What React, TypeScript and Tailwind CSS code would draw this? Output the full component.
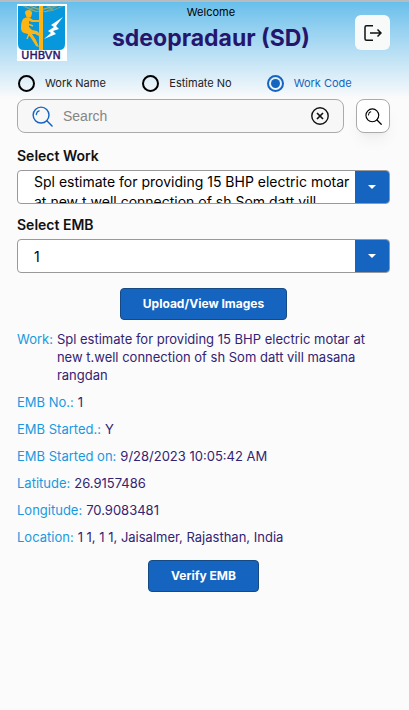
import { useState, type ReactNode } from "react"

const searchModes = ["Work Name", "Estimate No", "Work Code"]

const workTitle = "Spl estimate for providing 15 BHP electric motar at new t.well connection of sh Som datt vill masana rangdan"

const details = [
  { label: "Work:", value: workTitle },
  { label: "EMB No.:", value: "1" },
  { label: "EMB Started.:", value: "Y" },
  { label: "EMB Started on:", value: "9/28/2023 10:05:42 AM" },
  { label: "Latitude:", value: "26.9157486" },
  { label: "Longitude:", value: "70.9083481" },
  { label: "Location:", value: "1 1, 1 1, Jaisalmer, Rajasthan, India" },
]

function Logo() {
  return (
    <svg viewBox="0 0 50 57" className="h-[57px] w-[50px] shrink-0" role="img" aria-label="UHBVN">
      <rect width="50" height="57" fill="#fff" />
      <path d="M1 2H48V40Q48 46 42 46H7Q1 46 1 40Z" fill="#0797dc" />
      <g stroke="#c9b450" strokeWidth="0.6" fill="none">
        <path d="M6 2Q15 8 24 8Q36 8 46 2" />
        <path d="M12 2Q18 5 24 5Q32 5 38 2" />
        <path d="M8 2L20 8M14 2L22 6M20 2L12 6M40 2L28 8M34 2L26 6M30 2L36 6" />
      </g>
      <path d="M22 2H26V46H22Z" fill="#fcb515" />
      <g fill="#fcb515">
        <path d="M8 9Q8 6 11.500 6Q15 6 15 9.500L14 13Q12 14.500 9.500 13Z" />
        <path d="M6 15Q10 12 14 14.500L16 16H22V18H15L12 17L12 23L15 26L20 27L22 29V32L18 30L15 30L19 36L22 43L19 42L14 34L11 30L7 29Q4 28 4 24Q4 18 6 15Z" />
      </g>
      <path d="M8 25L12 30L10 35M11 20L16 22" stroke="#fcb515" strokeWidth="1.500" fill="none" />
      <path d="M46 13L34 21L37 23L31 27L34 29L27 35L39 30L36 27L42 25L39 22Z" fill="#fff" />
      <text
        x="24"
        y="55"
        textAnchor="middle"
        fill="#25166d"
        stroke="#25166d"
        strokeWidth="0.4"
        className="font-['DejaVu_Sans',sans-serif] text-[11px]"
      >
        UHBVN
      </text>
    </svg>
  )
}

function Magnifier({ className }: { className: string }) {
  return (
    <svg viewBox="0 0 22 22" fill="none" stroke="currentColor" strokeLinecap="round" className={className} aria-hidden="true">
      <circle cx="9.500" cy="9.500" r="8.300" strokeWidth="1.500" />
      <path d="M15.500 15.500L21 21" strokeWidth="1.600" />
      <path d="M4.500 9Q5 5.500 7.500 5" strokeWidth="1.300" />
    </svg>
  )
}

// The native select lies invisible over the box so that a long value can wrap inside it.
function SelectField({ id, label, options }: { id: string; label: string; options: string[] }) {
  const [value, setValue] = useState(options[0])

  return (
    <div>
      <label htmlFor={id} className="block text-sm leading-5 font-semibold text-[#111]">
        {label}
      </label>
      <div className="relative mt-1 flex h-[34px] overflow-hidden rounded-sm border border-[#999] bg-white focus-within:border-[#1565c0]">
        <div className="flex-1 overflow-hidden py-px pl-4 text-sm leading-5" aria-hidden="true">
          <span className={value.length < 30 ? "block pt-[6px]" : "block max-h-10 overflow-hidden"}>{value}</span>
        </div>
        <div className="flex w-[34px] shrink-0 items-center justify-center bg-[#1565c0]" aria-hidden="true">
          <svg viewBox="0 0 8 4" className="h-1 w-2">
            <path d="M0 0H8L4 4Z" fill="#fff" />
          </svg>
        </div>
        <select
          id={id}
          value={value}
          onChange={(e) => setValue(e.target.value)}
          className="absolute inset-0 h-full w-full cursor-pointer opacity-0"
        >
          {options.map((option) => (
            <option key={option}>{option}</option>
          ))}
        </select>
      </div>
    </div>
  )
}

function ActionButton({ children }: { children: ReactNode }) {
  return (
    <button
      type="button"
      className="h-8 rounded border border-[#164a85] bg-[#1565c0] px-[22px] text-xs font-bold text-white"
    >
      {children}
    </button>
  )
}

export default function App() {
  const [mode, setMode] = useState("Work Code")
  const [query, setQuery] = useState("")

  return (
    <div className="min-h-screen bg-[#fbfbfb] font-['Inter',sans-serif] text-black">
      <header className="border-t-2 border-[#b7bcbe] bg-linear-to-b from-[#67bfeb] to-[#fbfbfb] pr-[19px] pl-[17px]">
        <div className="flex items-start justify-between pt-[2px]">
          <Logo />
          <div className="text-center">
            <p className="text-[11px] leading-4">Welcome</p>
            <h1 className="mt-1 text-[23px] leading-7 font-bold text-[#25166d]">sdeopradaur (SD)</h1>
          </div>
          <button
            type="button"
            aria-label="Log out"
            className="mt-[11px] flex h-[35px] w-[35px] items-center justify-center rounded-md bg-[#f8fafa]"
          >
            <svg viewBox="0 0 18 16" fill="none" stroke="#111" strokeWidth="1.500" className="h-4 w-[18px]">
              <path d="M9 .8H2.500Q1 .8 1 2.300V13.700Q1 15.200 2.500 15.200H9" />
              <path d="M6 8H17M13.500 4.500L17 8L13.500 11.500" />
            </svg>
          </button>
        </div>

        <div className="mt-[13px] grid grid-cols-3 pb-[7px]" role="radiogroup" aria-label="Search by">
          {searchModes.map((item) => (
            <label
              key={item}
              className="flex cursor-pointer items-center gap-[10px] pl-px text-[11px] leading-[18px] text-[#222] has-checked:text-[#1565c0]"
            >
              <input
                type="radio"
                name="search-mode"
                value={item}
                checked={mode === item}
                onChange={() => setMode(item)}
                className="h-[17px] w-[17px] shrink-0 appearance-none rounded-full border-2 border-black p-[2px] checked:border-[#1565c0] checked:bg-[#1565c0] checked:bg-clip-content"
              />
              {item}
            </label>
          ))}
        </div>
      </header>

      <main className="pr-[19px] pl-[17px]">
        <form className="flex gap-3" onSubmit={(e) => e.preventDefault()}>
          <div className="flex h-[34px] min-w-0 flex-1 items-center rounded-lg border border-[#aaa] bg-[#f7f7f7] px-[14px]">
            <Magnifier className="h-[21px] w-[21px] shrink-0 text-[#1565c0]" />
            <input
              type="text"
              aria-label="Search"
              placeholder="Search"
              value={query}
              onChange={(e) => setQuery(e.target.value)}
              className="ml-[10px] min-w-0 flex-1 bg-transparent font-['Liberation_Sans',sans-serif] text-sm outline-none placeholder:text-[#858585]"
            />
            <button type="button" aria-label="Clear search" onClick={() => setQuery("")}>
              <svg viewBox="0 0 18 18" fill="none" stroke="#111" className="h-[18px] w-[18px]">
                <circle cx="9" cy="9" r="8.200" strokeWidth="1.400" />
                <path d="M6 6L12 12M12 6L6 12" strokeWidth="1.700" />
              </svg>
            </button>
          </div>
          <button
            type="submit"
            aria-label="Search works"
            className="flex h-[34px] w-[34px] shrink-0 items-center justify-center rounded-lg border border-[#aaa] bg-white shadow-lg shadow-black/5"
          >
            <Magnifier className="h-[17px] w-[17px]" />
          </button>
        </form>

        <div className="mt-[13px] flex flex-col gap-[11px]">
          <SelectField id="work" label="Select Work" options={[workTitle]} />
          <SelectField id="emb" label="Select EMB" options={["1"]} />
        </div>

        <div className="mt-[15px] flex justify-center">
          <ActionButton>Upload/View Images</ActionButton>
        </div>

        <dl className="mt-[10px] flex flex-col gap-[9px] text-[13px] leading-[18px]">
          {details.map(({ label, value }) => (
            <div key={label} className="flex gap-1">
              <dt className="shrink-0 text-[#1899df]">{label}</dt>
              <dd className="text-[#332373]">{value}</dd>
            </div>
          ))}
        </dl>

        <div className="mt-[14px] flex justify-center pb-6">
          <ActionButton>Verify EMB</ActionButton>
        </div>
      </main>
    </div>
  )
}
